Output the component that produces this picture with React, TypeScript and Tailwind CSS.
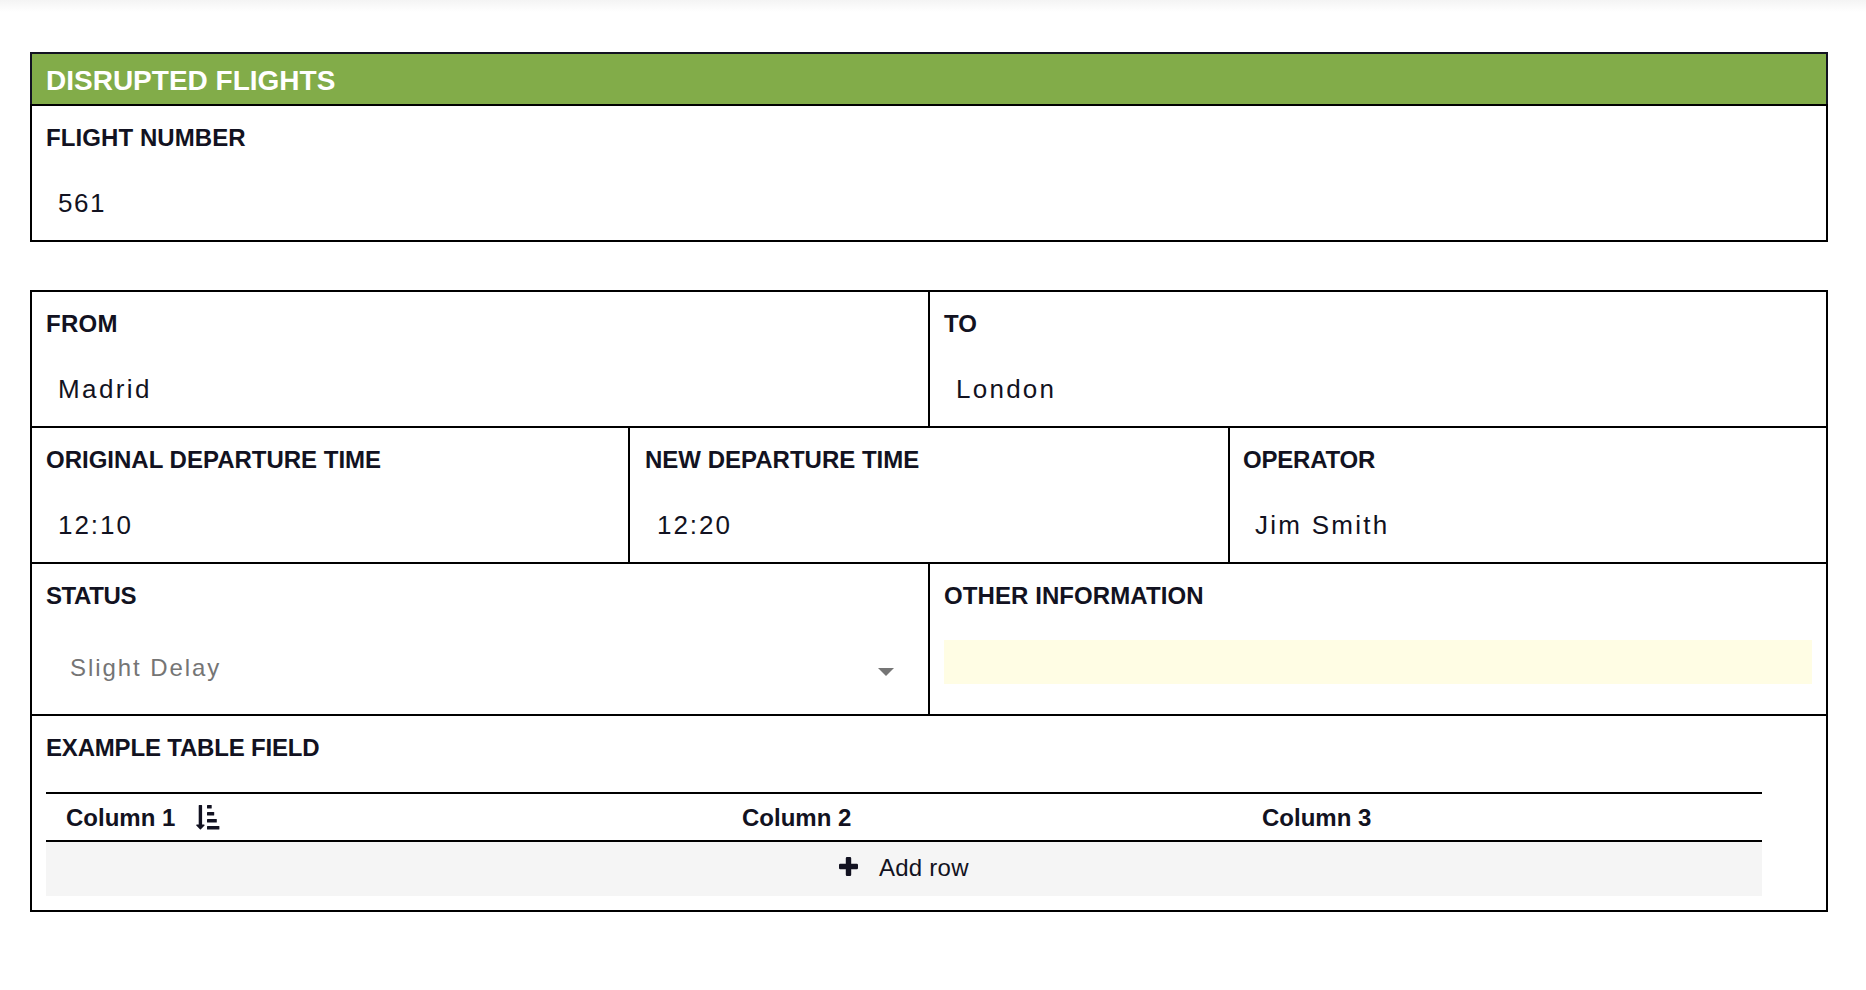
import type { ReactNode } from "react";

function Label({ children, className = "" }: { children: ReactNode; className?: string }) {
  return <div className={`h-7 text-2xl leading-7 font-bold whitespace-nowrap ${className}`}>{children}</div>;
}

type FieldProps = {
  label: string;
  value: string;
  className?: string;
  labelClass?: string;
  valueClass?: string;
};

function Field({
  label,
  value,
  className = "px-3.5",
  labelClass = "",
  valueClass = "tracking-[2.25px]",
}: FieldProps) {
  return (
    <div className={`h-[134px] border-black pt-[18px] ${className}`}>
      <Label className={labelClass}>{label}</Label>
      <div className={`mt-9 pl-3 text-[26px] leading-[30px] ${valueClass}`}>{value}</div>
    </div>
  );
}

function SortIcon() {
  return (
    <svg className="mt-px ml-[21px] h-[25px] w-6" viewBox="0 0 24 25" fill="currentColor">
      <path d="M3.3 0h2.200a.6.6 0 0 1 .6.6V19.500h2a.6.6 0 0 1 .4 1L4.900 24.300a.7.7 0 0 1-1 0L.3 20.500a.6.6 0 0 1 .4-1h2V.6a.6.6 0 0 1 .6-.6z" />
      <rect x="11" y="0" width="4.700" height="3.500" rx=".5" />
      <rect x="11" y="7" width="7.200" height="3.500" rx=".5" />
      <rect x="11" y="14" width="9.800" height="3.500" rx=".5" />
      <rect x="11" y="21" width="12.400" height="3.500" rx=".5" />
    </svg>
  );
}

function PlusIcon() {
  return (
    <svg className="mt-[3px] size-[19px]" viewBox="0 0 19 19" fill="currentColor">
      <path d="M8 0h3a1.200 1.200 0 0 1 1.200 1.200v5.600h5.600A1.200 1.200 0 0 1 19 8v3a1.200 1.200 0 0 1-1.200 1.200h-5.600v5.600A1.200 1.200 0 0 1 11 19H8a1.200 1.200 0 0 1-1.200-1.200v-5.600H1.200A1.200 1.200 0 0 1 0 11V8a1.200 1.200 0 0 1 1.200-1.200h5.600V1.200A1.200 1.200 0 0 1 8 0z" />
    </svg>
  );
}

export default function App() {
  return (
    <div className="h-[990px] w-full overflow-hidden bg-white font-['Liberation_Sans',Arial,sans-serif] text-[#121221]">
      <div className="h-3 bg-linear-to-b from-[#f4f4f4] to-white" />
      <main className="mt-10 ml-[30px] w-[1798px]">
        <section>
          <h1 className="h-[52px] border-2 border-b-0 border-[#121221] bg-[#82ac49] pt-[11px] pl-3.5 text-[28px] leading-8 font-bold text-white">
            DISRUPTED FLIGHTS
          </h1>
          <div className="border-2 border-black">
            <Field
              label="FLIGHT NUMBER"
              value="561"
              labelClass="tracking-[0.08px]"
              valueClass="tracking-[1.6px]"
            />
          </div>
        </section>

        <section className="mt-12 border-2 border-black">
          <div className="flex border-b-2 border-black">
            <Field
              label="FROM"
              value="Madrid"
              className="w-[898px] border-r-2 px-3.5"
              labelClass="tracking-[0.3px]"
              valueClass="tracking-[2.4px]"
            />
            <Field label="TO" value="London" className="flex-1 px-3.5" />
          </div>
          <div className="flex border-b-2 border-black">
            <Field
              label="ORIGINAL DEPARTURE TIME"
              value="12:10"
              className="w-[598px] border-r-2 px-3.5"
              valueClass="tracking-[1.95px]"
            />
            <Field
              label="NEW DEPARTURE TIME"
              value="12:20"
              className="w-[600px] border-r-2 pl-[15px]"
              valueClass="tracking-[1.95px]"
            />
            <Field
              label="OPERATOR"
              value="Jim Smith"
              className="flex-1 pl-[13px]"
              labelClass="tracking-[-0.2px]"
            />
          </div>
          <div className="flex h-[152px] border-b-2 border-black">
            <div className="w-[898px] border-r-2 border-black px-3.5 pt-[18px]">
              <Label className="tracking-[-0.4px]">STATUS</Label>
              <div className="mt-11 flex items-center justify-between pr-5 pl-6">
                <span className="text-2xl leading-7 tracking-[1.93px] text-[#757575]">Slight Delay</span>
                <svg className="mt-2 h-2 w-4" viewBox="0 0 16 8" fill="#757575">
                  <path d="M0 0h16L8 8z" />
                </svg>
              </div>
            </div>
            <div className="flex-1 px-3.5 pt-[18px]">
              <Label className="tracking-[0.08px]">OTHER INFORMATION</Label>
              <div className="mt-[30px] h-11 bg-[#fffde4]" />
            </div>
          </div>
          <div className="h-[194px] pt-[18px] pl-3.5">
            <Label className="tracking-[-0.18px]">EXAMPLE TABLE FIELD</Label>
            <div className="mt-[30px] w-[1716px]">
              <div className="flex h-[50px] border-y-2 border-black pt-[10px] pl-5">
                <div className="flex w-[676px]">
                  <Label>Column 1</Label>
                  <SortIcon />
                </div>
                <div className="w-[520px]">
                  <Label>Column 2</Label>
                </div>
                <Label>Column 3</Label>
              </div>
              <div className="flex h-[54px] bg-[#f5f5f5] pt-3 pl-[793px]">
                <PlusIcon />
                <span className="ml-[21px] text-2xl leading-7 tracking-[0.25px]">Add row</span>
              </div>
            </div>
          </div>
        </section>
      </main>
    </div>
  );
}
